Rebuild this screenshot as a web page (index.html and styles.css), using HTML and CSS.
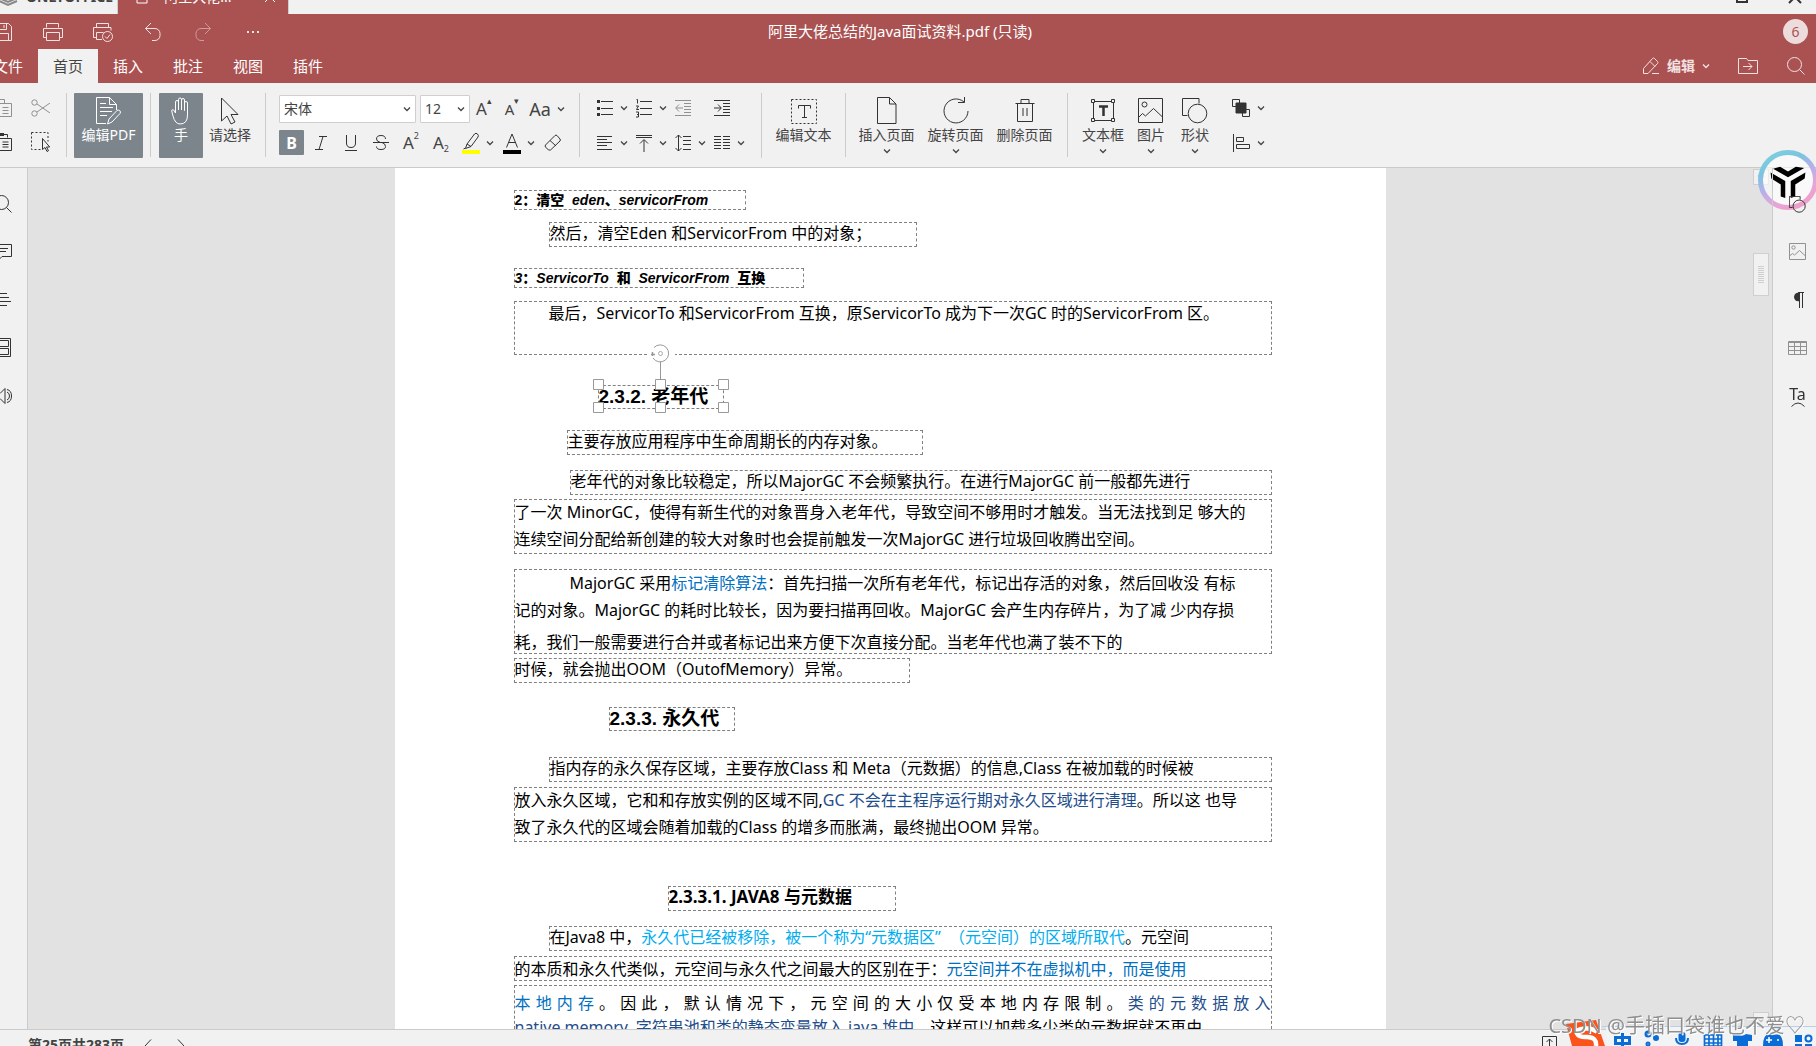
FILE: index.html
```html
<!DOCTYPE html>
<html lang="zh-CN">
<head>
<meta charset="utf-8">
<title>阿里大佬总结的Java面试资料.pdf</title>
<link rel="stylesheet" href="styles.css">
</head>
<body>
<svg class="defs" aria-hidden="true">
  <symbol id="chev" viewBox="0 0 8 8"><path d="M1 2.5l3 3 3-3" fill="none" stroke="currentColor" stroke-width="1.3"/></symbol>
  <symbol id="search" viewBox="0 0 20 20"><circle cx="8.5" cy="8.5" r="7"/><path d="M13.5 13.5l5 5"/></symbol>
  <symbol id="picture" viewBox="0 0 26 26"><path d="M.5.5h24v24H.5zM.5 19.5l4-4 3 2.500 8-7.500 9 8.500"/><circle cx="6.500" cy="6.500" r="2.500"/></symbol>
  <symbol id="shapes" viewBox="0 0 26 26"><path d="M5.500 17.500h-5V.5h16.500v5"/><circle cx="15.500" cy="15.500" r="9.300"/></symbol>
</svg>

<div class="app">
  <div class="strip">
    <div class="brand">
      <svg class="ic" width="20" height="20" viewBox="0 0 20 20"><path d="M1 7l9-4 9 4-9 4zM1 11l9 4 9-4M1 14l9 4 9-4" stroke="#888" stroke-width="2"/></svg>
      <span>ONLYOFFICE</span>
    </div>
    <div class="doc-tab">
      <svg class="ic" width="12" height="14" viewBox="0 0 12 14"><path d="M1 1h10v12H1z"/></svg>
      <span>阿里大佬...</span>
      <svg class="ic" width="12" height="12" viewBox="0 0 12 12"><path d="M1 1l10 10M11 1L1 11"/></svg>
    </div>
    <div class="win-controls">
      <svg class="ic" width="12" height="12" viewBox="0 0 12 12"><path d="M1 1h10v10H1z" stroke-width="2"/></svg>
      <svg class="ic" width="14" height="14" viewBox="0 0 14 14"><path d="M1 1l12 12M13 1L1 13" stroke-width="2"/></svg>
    </div>
  </div>

  <header class="header">
    <div class="title-row">
      <div class="quick">
        <button aria-label="保存"><svg class="ic" width="18" height="18" viewBox="0 0 18 18"><path d="M.5.5h14l3 3v14H.5zM4.500.5v6h8v-6M10 2v3M3.500 17.500v-7h11v7"/></svg></button>
        <button aria-label="打印"><svg class="ic" width="20" height="20" viewBox="0 0 20 20"><path d="M3.500 5.500v-4h12v4M3.500 15.500h-3v-9h19v9h-3M3.500 10.500h13v8h-13z"/></svg></button>
        <button aria-label="快速打印"><svg class="ic" width="20" height="20" viewBox="0 0 20 20"><path d="M3.500 5.500v-4h12v4M3.500 15.500h-3v-10h17.500v3M9 17.500H3.500v-7h7"/><circle cx="14.500" cy="14.500" r="5"/><path d="M12 14.500l2 2 3-4"/></svg></button>
        <button aria-label="撤消"><svg class="ic" width="18" height="20" viewBox="0 0 18 20"><path d="M7 1L1.500 6.500 7 12M1.500 6.500h9.500a5 5 0 0 1 5 5v2a5 5 0 0 1-5 5H8"/></svg></button>
        <button class="dim" aria-label="重做"><svg class="ic" width="18" height="20" viewBox="0 0 18 20"><path d="M11 1l5.500 5.500L11 12M16.500 6.500H7a5 5 0 0 0-5 5v2a5 5 0 0 0 5 5h3"/></svg></button>
        <button aria-label="更多"><svg class="ic" width="14" height="4" viewBox="0 0 14 4"><path d="M1 2h2M6 2h2M11 2h2" stroke-width="2"/></svg></button>
      </div>
      <h1 class="doc-title">阿里大佬总结的Java面试资料.pdf (只读)</h1>
      <div class="account"><span class="avatar">6</span></div>
    </div>
    <div class="tab-row">
      <nav class="tabs">
        <a href="#">文件</a><a href="#" class="on">首页</a><a href="#">插入</a><a href="#">批注</a><a href="#">视图</a><a href="#">插件</a>
      </nav>
      <div class="tab-tools">
        <button class="mode"><svg class="ic" width="18" height="18" viewBox="0 0 18 18"><path d="M1.500 11.500l9-10q1-1 2 0l3 3q1 1 0 2l-9.500 10H1.500zM8 4.500l5 5M10 16.500h7"/></svg><span>编辑</span><svg class="chev"><use href="#chev"/></svg></button>
        <button aria-label="打开位置"><svg class="ic" width="20" height="18" viewBox="0 0 20 18"><path d="M.5 16.500v-15h8l1.500 2h9.500v13zM5 9.500h9M10.500 6l3.500 3.500-3.500 3.500"/></svg></button>
        <button aria-label="搜索"><svg class="ic" width="20" height="20"><use href="#search"/></svg></button>
      </div>
    </div>
  </header>

  <div class="toolbar">
    <div class="group clip">
      <button class="faded" aria-label="复制"><svg class="ic" width="18" height="18" viewBox="0 0 18 18"><path d="M5.500 13.500h-5V.5h10v4M5.500 4.500h12v13h-12zM8.500 8.500h6M8.500 11.500h6M8.500 14.500h6"/></svg></button>
      <button class="faded" aria-label="剪切"><svg class="ic" width="20" height="18" viewBox="0 0 20 18"><circle cx="3.500" cy="3.500" r="2.700"/><circle cx="3.500" cy="14.500" r="2.700"/><path d="M6 5l13 9M6 13l13-9"/></svg></button>
      <button aria-label="粘贴"><svg class="ic" width="18" height="18" viewBox="0 0 18 18"><path d="M5.500 15.500h-5v-14h13v3M5.500 5.500h12v12h-12zM8.500 9h6M8.500 11.500h6M8.500 14h6"/><path d="M4 1.500h6" stroke-width="3"/></svg></button>
      <button aria-label="全选"><svg class="ic" width="20" height="20" viewBox="0 0 20 20"><path d="M.5.5h16.500v9M.5.5v17H10" stroke-dasharray="2 2"/><path d="M11.500 6.500v11l2.500-2 2 4 1.500-.8-2-3.700h3.200z"/></svg></button>
    </div>
    <div class="group edit-pdf">
      <button class="big on"><svg class="ic" width="26" height="28" viewBox="0 0 26 28"><path d="M10 26.500H.5V.5h13l7 7V13M13.500.5v7h7M4 6.500h6M4 10.500h13M4 14.500h12M4 18.500h7M11.500 27l1.500-5 8-8.500q1.500-1 2.800.2t.2 2.800l-8 8.500z"/></svg><span>编辑PDF</span></button>
    </div>
    <div class="group pointer">
      <button class="big on"><svg class="ic" width="20" height="28" viewBox="0 0 20 28"><path d="M4.500 16V5q0-1.500 1.500-1.500T7.500 5v8V2.500Q7.500 1 9 1t1.500 1.500V13 3q0-1.500 1.500-1.500T13.500 3v10.500V6q0-1.500 1.500-1.500T16.500 6v12q0 9-7.500 9-5 0-7-8L.7 14q0-2 2-1z"/></svg><span>手</span></button>
      <button class="big"><svg class="ic" width="20" height="28" viewBox="0 0 20 28"><path d="M1.500 1v23l5.500-5 4 8 4-2-4-7.500h7z"/></svg><span>请选择</span></button>
    </div>
    <div class="group font">
      <div class="row">
        <label class="combo wide"><select aria-label="字体"><option>宋体</option></select><svg class="chev"><use href="#chev"/></svg></label>
        <label class="combo"><select aria-label="字号"><option>12</option></select><svg class="chev"><use href="#chev"/></svg></label>
        <button class="mini glyph" aria-label="增大字号">A<sup>▴</sup></button>
        <button class="mini glyph small" aria-label="减小字号">A<sup>▾</sup></button>
        <button class="mini glyph case" aria-label="更改大小写">Aa<svg class="chev"><use href="#chev"/></svg></button>
      </div>
      <div class="row formats">
        <button class="bold on" aria-label="加粗">B</button>
        <button class="cell" aria-label="倾斜"><svg class="ic" width="16" height="18" viewBox="0 0 16 18"><path d="M6 2.500h8M2 15.500h8M10 2.500L6 15.500"/></svg></button>
        <button class="cell" aria-label="下划线"><svg class="ic" width="16" height="18" viewBox="0 0 16 18"><path d="M3.500 1v8q0 4.500 4.500 4.500t4.500-4.500V1M2 16.500h12"/></svg></button>
        <button class="cell" aria-label="删除线"><svg class="ic" width="16" height="18" viewBox="0 0 16 18"><path d="M12.500 5q0-3.500-4.500-3.500T3.500 5q0 2.500 4 3.500M0 8.500h16M9 8.500q3.500 1 3.500 4T8 15.500t-4.500-3"/></svg></button>
        <button class="cell glyph" aria-label="上标">A<sup>2</sup></button>
        <button class="cell glyph" aria-label="下标">A<sub>2</sub></button>
        <button class="cell split" aria-label="突出显示"><svg class="ic" width="18" height="22" viewBox="0 0 18 22"><path d="M5 12l7.500-10q1.500-1.500 3 0t.5 3L9 14.500zM5 12l-1.500 4.500 5.500-2M3.500 16l-2 1"/><path d="M0 20h18" stroke="#ff0" stroke-width="4"/></svg><svg class="chev"><use href="#chev"/></svg></button>
        <button class="cell split" aria-label="字体颜色"><svg class="ic" width="18" height="22" viewBox="0 0 18 22"><path d="M3.500 15.500L9 2l5.500 13.500M5.500 10.500h7"/><path d="M0 20h18" stroke="#000" stroke-width="4"/></svg><svg class="chev"><use href="#chev"/></svg></button>
        <button class="cell" aria-label="清除样式"><svg class="ic" width="18" height="18" viewBox="0 0 18 18"><path d="M1.500 11L11 1.500q1-.8 2 0L16 5q.8 1 0 2L6.500 16h-2L1.500 13q-.8-1 0-2zM6 6.500l6 5.500"/></svg></button>
      </div>
    </div>
    <div class="group para">
      <button aria-label="项目符号"><svg class="ic" width="16" height="18" viewBox="0 0 16 18"><path d="M4 2.500h12M4 9.500h12M4 15.500h12"/><path d="M0 2.500h3M0 9.500h3M0 15.500h3" stroke-width="3"/></svg><svg class="chev"><use href="#chev"/></svg></button>
      <button aria-label="编号"><svg class="ic" width="16" height="20" viewBox="0 0 16 20"><path d="M4 3.500h12M4 10.500h12M4 16.500h12M.5 1.500h1v4M0 8h2.500L.5 11.500H3M0 14h2.500v5H0M1 16.500h1"/></svg><svg class="chev"><use href="#chev"/></svg></button>
      <button class="faded" aria-label="减少缩进"><svg class="ic" width="16" height="18" viewBox="0 0 16 18"><path d="M0 1.500h16M9 4.500h7M9 7.500h7M9 10.500h7M9 13.500h7M0 16.500h16M8 9H1M4 5.500L.7 9 4 12.500"/></svg></button>
      <button aria-label="增加缩进"><svg class="ic" width="16" height="18" viewBox="0 0 16 18"><path d="M0 1.500h16M9 4.500h7M9 7.500h7M9 10.500h7M9 13.500h7M0 16.500h16M0 9h7M4 5.500L7.300 9 4 12.500"/></svg></button>
      <button aria-label="水平对齐"><svg class="ic" width="16" height="18" viewBox="0 0 16 18"><path d="M0 2.500h15M0 5.500h10M0 8.500h15M0 11.500h10M0 15.500h15"/></svg><svg class="chev"><use href="#chev"/></svg></button>
      <button aria-label="垂直对齐"><svg class="ic" width="16" height="18" viewBox="0 0 16 18"><path d="M0 1.500h16M0 3.500h16M8 18V6M4 9.500L8 5.500l4 4"/></svg><svg class="chev"><use href="#chev"/></svg></button>
      <button aria-label="行距"><svg class="ic" width="16" height="18" viewBox="0 0 16 18"><path d="M3.500 1v16M.5 4l3-3 3 3M.5 14l3 3 3-3M8 2.500h8M8 6.500h8M8 10.500h8M8 15.500h8"/></svg><svg class="chev"><use href="#chev"/></svg></button>
      <button aria-label="分栏"><svg class="ic" width="16" height="18" viewBox="0 0 16 18"><path d="M0 2.500h7M9 2.500h7M0 5.500h7M9 5.500h7M0 8.500h7M9 8.500h7M0 11.500h7M9 11.500h7M0 14.500h7M9 14.500h7"/></svg><svg class="chev"><use href="#chev"/></svg></button>
    </div>
    <div class="group text">
      <button class="big"><svg class="ic" width="26" height="28" viewBox="0 0 26 28"><path d="M.5 2.500h25v24H.5z" stroke-dasharray="2 2"/><path d="M7.500 11.500v-3h12v3M13.500 8.500v12M11 20.500h5"/></svg><span>编辑文本</span></button>
    </div>
    <div class="group pages">
      <button class="big"><svg class="ic" width="20" height="28" viewBox="0 0 20 28"><path d="M.5.500H12.500l6.500 6.500V26.500H.5zM12.500.5v6.500h6.500"/></svg><span>插入页面</span><svg class="chev"><use href="#chev"/></svg></button>
      <button class="big"><svg class="ic" width="26" height="28" viewBox="0 0 26 28"><path d="M21 5A12 12 0 1 0 25 14M21.500 0v5.500H15"/></svg><span>旋转页面</span><svg class="chev"><use href="#chev"/></svg></button>
      <button class="big"><svg class="ic" width="20" height="28" viewBox="0 0 20 28"><path d="M.5 6.500h19M2.500 6.500v18h15v-18M6 6V2.500h8V6M8 11v8M12 11v8"/></svg><span>删除页面</span></button>
    </div>
    <div class="group insert">
      <button class="big"><svg class="ic" width="24" height="28" viewBox="0 0 24 28"><path d="M2.500 4.500h20v19h-20z"/><path d="M.5 2.500h3v3h-3zM20.500 2.500h3v3h-3zM.5 21.500h3v3h-3zM20.500 21.500h3v3h-3z" fill="#f1f1f1"/><path d="M8 9.500h9M12.500 9v10" stroke-width="2.500"/></svg><span>文本框</span><svg class="chev"><use href="#chev"/></svg></button>
      <button class="big"><svg class="ic" width="26" height="28"><use href="#picture"/></svg><span>图片</span><svg class="chev"><use href="#chev"/></svg></button>
      <button class="big"><svg class="ic" width="26" height="28"><use href="#shapes"/></svg><span>形状</span><svg class="chev"><use href="#chev"/></svg></button>
      <div class="arrange">
        <button aria-label="排列"><svg class="ic" width="18" height="18" viewBox="0 0 18 18"><path d="M4 7.500H.5v-7h7V4M14 10.500h3.500v7h-7V14"/><path d="M4 4h10v10H4z" fill="#333"/></svg><svg class="chev"><use href="#chev"/></svg></button>
        <button aria-label="对齐"><svg class="ic" width="18" height="18" viewBox="0 0 18 18"><path d="M1.500 0v18M4.500 3.500h7v4h-7zM4.500 10.500h13v4h-13z"/></svg><svg class="chev"><use href="#chev"/></svg></button>
      </div>
    </div>
  </div>

  <main class="work">
    <aside class="side">
      <button aria-label="查找"><svg class="ic" width="20" height="20"><use href="#search"/></svg></button>
      <button aria-label="批注"><svg class="ic" width="20" height="20" viewBox="0 0 20 20"><path d="M1.500 2.500h17v12H9l-4 4v-4H1.500zM5 6.500h10M5 9.500h8"/></svg></button>
      <button aria-label="标题"><svg class="ic" width="20" height="20" viewBox="0 0 20 20"><path d="M2 3.500h12M6 7.500h10M6 11.500h12M2 15.500h12"/></svg></button>
      <button aria-label="缩略图"><svg class="ic" width="20" height="20" viewBox="0 0 20 20"><path d="M1.500.5h16v18h-16zM3.500 2.500h12v6h-12zM3.500 10.500h12v6h-12z"/></svg></button>
      <button aria-label="朗读"><svg class="ic" width="20" height="20" viewBox="0 0 20 20"><path d="M2 7.500h5l5-5v15l-5-5H2zM14 3.500q4.500 1 4.500 6.500T14 16.500M14 6q2.500 1 2.500 4T14 14"/></svg></button>
    </aside>

    <div class="canvas">
      <article class="page">
        <h4 class="box sub w-232"><b>2：清空</b>&nbsp; eden<b>、</b>servicorFrom</h4>
        <p class="box one after-12 in-35 w-368">然后，清空Eden 和ServicorFrom 中的对象；</p>
        <h4 class="box sub after-21 w-290">3<b>：</b>ServicorTo &nbsp;<b>和</b>&nbsp; ServicorFrom &nbsp;<b>互换</b></h4>
        <p class="box tall pad-1 after-13"><span class="first-35">最后，ServicorTo 和ServicorFrom 互换，原ServicorTo 成为下一次GC 时的ServicorFrom 区。</span></p>
        <h3 class="box head after-30 in-84 w-126">2.3.2. 老年代
          <svg class="handles" width="150" height="78" viewBox="0 0 150 78">
            <path d="M60 13h27" stroke="#fff" stroke-width="3"/>
            <path d="M72.500 21v20M66 6.500A8.500 8.500 0 1 1 65 17" fill="none" stroke="#999"/>
            <circle cx="72.500" cy="12.500" r="2" fill="none" stroke="#aaa"/>
            <path d="M63 13.500h4M64.500 11v4" stroke="#999" stroke-width="1.500"/>
            <path d="M5.500 38.500h10v10h-10zM67.500 38.500h10v10h-10zM130.500 38.500h10v10h-10zM5.500 61.500h10v10h-10zM67.500 61.500h10v10h-10zM130.500 61.500h10v10h-10z" fill="#fff" stroke="#999"/>
          </svg>
        </h3>
        <p class="box one after-21 in-53 w-356">主要存放应用程序中生命周期长的内存对象。</p>
        <p class="box one after-15 in-56">老年代的对象比较稳定，所以MajorGC 不会频繁执行。在进行MajorGC 前一般都先进行</p>
        <p class="box two pad-2 after-4"><span>了一次 MinorGC，使得有新生代的对象晋身入老年代，导致空间不够用时才触发。当无法找到足 够大的</span><span>连续空间分配给新创建的较大对象时也会提前触发一次MajorGC 进行垃圾回收腾出空间。</span></p>
        <p class="box three pad-3 after-15"><span class="first-56">MajorGC 采用<em class="blue">标记清除算法</em>：首先扫描一次所有老年代，标记出存活的对象，然后回收没 有标</span><span>记的对象。MajorGC 的耗时比较长，因为要扫描再回收。MajorGC 会产生内存碎片，为了减 少内存损</span><span class="loose">耗，我们一般需要进行合并或者标记出来方便下次直接分配。当老年代也满了装不下的</span></p>
        <p class="box one after-4 w-396">时候，就会抛出OOM（OutofMemory）异常。</p>
        <h3 class="box head after-24 in-95 w-126">2.3.3. 永久代</h3>
        <p class="box one after-26 in-35">指内存的永久保存区域，主要存放Class 和 Meta（元数据）的信息,Class 在被加载的时候被</p>
        <p class="box two pad-2 after-5"><span>放入永久区域，它和和存放实例的区域不同,<em class="navy">GC 不会在主程序运行期对永久区域进行清理</em>。所以这 也导</span><span>致了永久代的区域会随着加载的Class 的增多而胀满，最终抛出OOM 异常。</span></p>
        <h4 class="box minor after-44 in-154 w-228">2.3.3.1. JAVA8 与元数据</h4>
        <p class="box one after-15 in-35">在Java8 中，<em class="cyan">永久代已经被移除，被一个称为“元数据区”&nbsp; （元空间）的区域所取代</em>。元空间</p>
        <p class="box one pad-2 after-5">的本质和永久代类似，元空间与永久代之间最大的区别在于：<em class="blue">元空间并不在虚拟机中，而是使用</em></p>
        <p class="box three pad-7 after-4"><span class="spread"><em class="blue">本地内存</em>。因此，默认情况下，元空间的大小仅受本地内存限制。<em class="navy">类的元数据放入</em></span><span class="tight"><em class="navy">native memory, 字符串池和类的静态变量放入 java 堆中</em>，这样可以加载多少类的元数据就不再由</span></p>
      </article>
      <div class="scroll">
        <button aria-label="向上"><svg class="chev"><use href="#chev"/></svg></button>
        <div class="track"><div class="thumb"></div></div>
        <button aria-label="向下"><svg class="chev"><use href="#chev"/></svg></button>
      </div>
    </div>

    <aside class="side right">
      <button aria-label="形状设置"><svg class="ic" width="17" height="17" viewBox="0 0 26 26"><path d="M5.500 17.500h-5V.5h16.500v5" stroke-width="1.500"/><circle cx="15.500" cy="15.500" r="9.300" stroke-width="1.500"/></svg></button>
      <button class="faded" aria-label="图片设置"><svg class="ic" width="18" height="18" viewBox="0 0 18 18"><path d="M.5.5h16v16H.5zM.5 13l3-2.500 2 1.500 5-4.500 6 5.500"/><circle cx="4.500" cy="4.500" r="1.700"/></svg></button>
      <button aria-label="段落设置"><svg class="ic" width="12" height="16" viewBox="0 0 12 16"><path d="M12 .5H6M7.500.5V16M10.500.5V16"/><path d="M6.500 1a4 4 0 0 0 0 8z" fill="#333"/></svg></button>
      <button class="faded" aria-label="表格设置"><svg class="ic" width="20" height="14" viewBox="0 0 20 14"><path d="M.5.5h18v13H.5zM.5 1.500h18M.5 5.500h18M.5 9.500h18M6.500 2v11M12.500 2v11"/></svg></button>
      <button class="art" aria-label="艺术字设置"><span>Ta</span><svg class="ic" width="14" height="5" viewBox="0 0 14 5"><path d="M.5 4.500q6.500-7 13 0"/></svg></button>
    </aside>
  </main>

  <footer class="status">
    <span class="page-no">第25页共283页</span>
    <button aria-label="上一页"><svg class="ic" width="8" height="14" viewBox="0 0 8 14"><path d="M7 .5L1 7l6 6.500"/></svg></button>
    <button aria-label="下一页"><svg class="ic" width="8" height="14" viewBox="0 0 8 14"><path d="M1 .5L7 7l-6 6.500"/></svg></button>
    <button class="fit" aria-label="适合页面"><svg class="ic" width="16" height="18" viewBox="0 0 16 18"><path d="M.5.5h14v16H.5z"/><path d="M7.500 11V3M4.500 6l3-3 3 3M3 10v3M12 10v3"/></svg></button>
  </footer>
</div>

<svg class="float-logo" width="60" height="60" viewBox="0 0 60 60" aria-hidden="true">
  <defs><linearGradient id="ring" x1="0.200" y1="0" x2="0.700" y2="1"><stop offset="0" stop-color="#7ccfdd"/><stop offset=".25" stop-color="#7cc4e0"/><stop offset=".5" stop-color="#b5b0ea"/><stop offset=".8" stop-color="#e8a5d8"/><stop offset="1" stop-color="#ee9fc8"/></linearGradient></defs>
  <circle cx="30" cy="30" r="27.500" fill="#fff" fill-opacity=".6" stroke="url(#ring)" stroke-width="5"/>
  <path d="M17 19l5-1.500 8 5 8-5 6 1-14 8zM13.500 24l13 7.500V47l-3-1V34L14 28zM46.500 24l-13 7.500V47l3-1V34l9.500-6z" fill="#000" stroke="#000" stroke-width="1.500"/>
</svg>

<div class="ime" aria-hidden="true">
  <svg width="250" height="26" viewBox="0 0 250 26">
    <path d="M40 6h210v20H40z" fill="#f2f3f5"/><path d="M36 6.500h214" stroke="#b9cfe8"/>
    <path d="M0 4l30-4 9 26H6z" fill="#fa541c"/>
    <path d="M31 12q-4-4-12-3.500-10 1-8 5t10 3.500q10 0 9 9" fill="none" stroke="#fff" stroke-width="4.500"/>
    <g fill="none" stroke="#0a6cd6" stroke-width="3"><path d="M49.500 17.500h14v6h-14zM56.500 13v13"/><circle cx="82" cy="14" r="2"/><circle cx="90" cy="18" r="1.500"/><circle cx="82" cy="24" r="1"/></g>
    <path d="M110 18q0 6 6 6t6-6" fill="none" stroke="#0a6cd6" stroke-width="2"/>
    <rect x="112.500" y="12" width="7" height="10" rx="3" fill="#0a6cd6"/>
    <path d="M138.500 15h17v11h-17zM138 19h18M138 23h18M143 15v11M147.500 15v11M152 15v11" fill="none" stroke="#0a6cd6" stroke-width="1.700"/>
    <path d="M167 15l5-1q4 3 8 0l6 1v6h-4v5h-11v-5h-4zM197 26q0-12 6-11.500h8q6-.5 6 11.500z" fill="#0a6cd6"/>
    <path d="M203 17v6M200 20h6M211 20h2" stroke="#fff" stroke-width="1.500"/>
    <path d="M229 15h7v7h-7zM229 24h7v2h-7zM239 24h7v2h-7z" fill="#0a6cd6"/><circle cx="242.500" cy="18.500" r="3" fill="none" stroke="#0a6cd6" stroke-width="2"/>
  </svg>
</div>
<div class="mark">CSDN @手插口袋谁也不爱♡</div>
</body>
</html>
```
FILE: styles.css
```css
* { box-sizing: border-box; }
body {
  margin: 0;
  height: 100vh;
  overflow: hidden;
  background: #f1f1f1;
  color: #444;
  font: 14px/20px "Noto Sans", "Noto Sans CJK SC", sans-serif;
}
button {
  display: flex;
  align-items: center;
  justify-content: center;
  padding: 0;
  border: 0;
  background: none;
  color: inherit;
  font: inherit;
}
h1, h3, h4, p { margin: 0; }
.defs { position: absolute; width: 0; height: 0; }
.ic { flex: none; fill: none; stroke: #333; stroke-width: 1; }
.chev { flex: none; width: 8px; height: 8px; }
.faded { opacity: .5; }

/* The window runs past the viewport on every side */
.app {
  display: flex;
  flex-direction: column;
  height: calc(100vh + 38px);
  margin: -20px -6px 0 -22px;
}

.strip { display: flex; flex: none; height: 34px; align-items: stretch; }
.brand { display: flex; align-items: center; gap: 8px; width: 139px; padding-left: 20px; font-weight: 700; font-size: 14px; }
.doc-tab {
  display: flex; align-items: center; justify-content: space-between;
  width: 172px; padding: 0 12px 0 18px;
  border: 1px solid #cfcfcf; border-width: 0 1px;
  background: #aa5252; color: #fff;
}
.doc-tab .ic { stroke: #fff; }
.doc-tab span { padding-right: 16px; }
.win-controls { display: flex; align-items: center; gap: 40px; margin-left: auto; padding-right: 20px; }

.header { flex: none; background: #aa5252; color: #fff; }
.header .ic { stroke: #f3e2e2; }
.title-row { display: grid; grid-template-columns: 1fr auto 1fr; align-items: center; height: 35px; }
.quick { display: flex; }
.quick button { width: 50px; height: 35px; }
.quick .dim { opacity: .5; }
.doc-title { font-weight: 400; font-size: 15px; line-height: 20px; padding-bottom: 2px; }
.account { display: flex; justify-content: flex-end; padding-right: 14px; }
.avatar { width: 25px; border-radius: 50%; background: #eddcdc; color: #aa5252; line-height: 25px; text-align: center; }
.tab-row { display: flex; justify-content: space-between; height: 34px; }
.tabs { display: flex; }
.tabs a { padding: 0 15px; color: #fff; font-size: 15px; line-height: 34px; text-decoration: none; }
.tabs .on { background: #f1f1f1; color: #444; }
.tab-tools { display: flex; align-items: center; gap: 28px; padding-right: 16px; }
.mode { gap: 7px; color: #f3e2e2; font-weight: 700; }

.toolbar { display: flex; flex: none; height: 85px; padding: 10px 0 10px 6px; border-bottom: 1px solid #cbcbcb; }
.group { display: flex; flex: none; border-right: 1px solid #cbcbcb; }
.clip { display: grid; grid-template-columns: 38px 38px; grid-template-rows: 30px 38px; padding-right: 6px; align-items: center; }
.edit-pdf { padding: 0 7px; }
.edit-pdf .big { width: 69px; }
.pointer { padding: 0 8px; }
.pointer .big { width: 44px; }
.pointer .big + .big { width: 54px; }
.big { flex-direction: column; justify-content: flex-start; padding-top: 4px; height: 65px; white-space: nowrap; }
.big span { line-height: 20px; }
.big .chev { margin-top: 2px; }
.big.on, .bold.on { border-radius: 1px; background: #7d858c; color: #fff; }
.big.on .ic { stroke: #fff; }

.font { flex-direction: column; gap: 7px; width: 314px; padding: 2px 0 0 13px; }
.row { display: flex; align-items: center; height: 28px; }
.combo { position: relative; width: 50px; }
.combo.wide { width: 137px; margin-right: 4px; }
.combo select {
  width: 100%; height: 28px; padding: 0 4px;
  appearance: none; border: 1px solid #cfcfcf; border-radius: 1px;
  background: #fff; color: #444; font: inherit;
}
.combo .chev { position: absolute; right: 5px; top: 10px; }
.mini { width: 28px; height: 28px; }
.glyph { font-size: 17px; line-height: 24px; }
.glyph sup, .glyph sub { font-size: 9px; line-height: 12px; }
.glyph sup { align-self: flex-start; }
.glyph sub { align-self: flex-end; }
.glyph.small { font-size: 15px; }
.case { gap: 6px; width: 42px; font-size: 18px; }
.formats { height: 25px; }
.bold { width: 25px; height: 25px; margin-right: 2px; font-weight: 700; font-size: 16px; }
.cell { width: 30px; height: 25px; }
.split { width: 38px; margin-right: 3px; padding-left: 6px; gap: 6px; justify-content: flex-start; }

.para { display: grid; grid-template-columns: repeat(4, 39px); grid-template-rows: 30px 40px; width: 182px; padding-left: 14px; align-items: center; height: 65px; }
.para button, .arrange button { justify-content: flex-start; gap: 7px; padding-left: 3px; }
.text { width: 84px; justify-content: center; }
.pages { width: 222px; padding-left: 6px; }
.pages .big { width: 69px; }
.insert { padding-left: 9px; border: 0; }
.insert .big { width: 44px; }
.insert .big:first-child { width: 52px; }
.arrange { display: grid; grid-template-rows: 30px 40px; margin-left: 12px; align-items: center; height: 65px; }

.work { display: flex; flex: 1; min-height: 0; }
.side { flex: none; width: 50px; padding-top: 12px; border-right: 1px solid #cbcbcb; }
.side button { width: 49px; height: 48px; }
.side.right { position: relative; z-index: 2; border: 0; border-left: 1px solid #cbcbcb; }
.side .art { flex-direction: column; color: #333; font-size: 16px; line-height: 16px; }
.canvas { display: flex; flex: 1; min-width: 0; background: #e2e2e2; }
.scroll { display: flex; flex: none; flex-direction: column; width: 20px; padding: 1px 3px 1px 1px; }
.scroll button, .thumb { width: 16px; height: 16px; border: 1px solid #cfcfcf; background: #f1f1f1; color: #bbb; }
.track { flex: 1; padding-top: 68px; }
.thumb { height: 43px; padding: 12px 4px; background: repeating-linear-gradient(#cfcfcf 0 1px, #f1f1f1 1px 2px) content-box, #f1f1f1; }

.page {
  width: 991px; margin: 0 auto; padding: 22px 114px 0 119px;
  overflow: hidden; background: #fff; color: #000;
  font-size: 16px; line-height: 20px; white-space: nowrap;
}
.box { border: 1px dashed #808080; }
.box span { display: block; }
.box em { font-style: normal; }
.box span + span { margin-top: 7px; }
.box span + .loose { margin-top: 12px; }
.box span + .tight { margin-top: 4px; }
.one { height: 25px; }
.two { height: 55px; }
.tall { height: 54px; }
.three { height: 85px; }
.box.sub { height: 20px; font: italic 700 14px/18px "Liberation Sans", "Noto Sans CJK SC", sans-serif; }
.sub b { font-style: normal; }
.box.head { position: relative; height: 24px; font: 700 19px/22px "Liberation Sans", "Noto Sans CJK SC", sans-serif; }
.box.minor { height: 25px; font: 700 17px/20px "Noto Sans", "Noto Sans CJK SC", sans-serif; }
.spread { text-align: justify; text-align-last: justify; white-space: normal; }
.handles { position: absolute; left: -11px; top: -45px; }
.blue { color: #0070c0; }
.navy { color: #1f4e8c; }
.cyan { color: #00aeef; }

.pad-1 { padding-top: 1px; }
.pad-2 { padding-top: 2px; }
.pad-3 { padding-top: 3px; }
.pad-7 { padding-top: 7px; }
.after-4 { margin-top: 4px; }
.after-5 { margin-top: 5px; }
.after-12 { margin-top: 12px; }
.after-13 { margin-top: 13px; }
.after-15 { margin-top: 15px; }
.after-21 { margin-top: 21px; }
.after-24 { margin-top: 24px; }
.after-26 { margin-top: 26px; }
.after-30 { margin-top: 30px; }
.after-44 { margin-top: 44px; }
.in-35 { margin-left: 35px; }
.in-53 { margin-left: 53px; }
.in-56 { margin-left: 56px; }
.in-84 { margin-left: 84px; }
.in-95 { margin-left: 95px; }
.in-154 { margin-left: 154px; }
.first-35 { padding-left: 34px; }
.first-56 { padding-left: 55px; }
.w-126 { width: 126px; }
.w-228 { width: 228px; }
.w-232 { width: 232px; }
.w-290 { width: 290px; }
.w-356 { width: 356px; }
.w-368 { width: 368px; }
.w-396 { width: 396px; }

.status { display: flex; flex: none; align-items: center; height: 35px; padding: 0 264px 0 50px; border-top: 1px solid #cbcbcb; }
.page-no { margin-right: 20px; font-weight: 700; line-height: 14px; padding-bottom: 4px; }
.status button { width: 8px; margin-right: 25px; padding-bottom: 2px; }
.status .fit { width: 16px; margin: 0 0 0 auto; padding-bottom: 5px; }

.float-logo { position: fixed; z-index: 1; right: -2px; top: 150px; }
.ime { position: fixed; z-index: 3; right: 0; bottom: 0; height: 26px; line-height: 0; }
.mark {
  position: fixed; z-index: 4; right: 11px; bottom: 6px;
  color: #8f8f8f; font-size: 20px; line-height: 28px;
  text-shadow: 1px 1px 0 #fff;
}
```
